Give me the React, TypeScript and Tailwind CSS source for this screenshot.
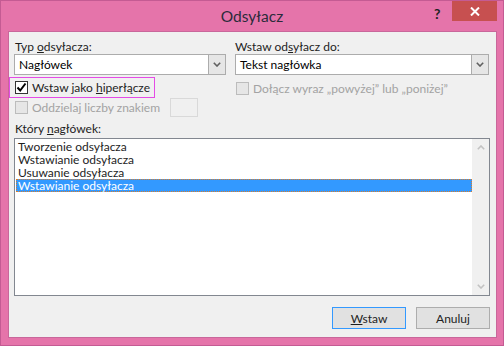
import React from 'react'

const Chevron = ({ up, color = '#606060' }: { up?: boolean; color?: string }) => (
  <svg width="8" height="5" viewBox="0 0 8 5">
    <polyline
      points={up ? '0.8,4.2 4,1 7.2,4.2' : '0.8,0.8 4,4 7.2,0.8'}
      fill="none"
      stroke={color}
      strokeWidth="1.6"
    />
  </svg>
)

const Checkbox = ({ checked, disabled }: { checked?: boolean; disabled?: boolean }) => (
  <span
    className={`w-[13px] h-[13px] shrink-0 border flex items-center justify-center ${
      disabled ? 'border-[#bcbcbc] bg-[#e6e6e6]' : 'border-[#333333] bg-white'
    }`}
  >
    {checked && (
      <svg width="11" height="11" viewBox="0 0 11 11">
        <polyline points="1.5,5.5 4.2,8.5 9.5,1.5" fill="none" stroke="#000" strokeWidth="2" />
      </svg>
    )}
  </span>
)

const Select = ({ value }: { value: string }) => (
  <div className="h-[21px] border border-[#acacac] bg-white flex">
    <div className="flex-1 pl-[4px] flex items-center text-black">{value}</div>
    <div className="w-[17px] bg-[#e6e6e6] border-l border-[#acacac] flex items-center justify-center">
      <Chevron />
    </div>
  </div>
)

const items = ['Tworzenie odsyłacza', 'Wstawianie odsyłacza', 'Usuwanie odsyłacza', 'Wstawianie odsyłacza']

export default function App() {
  return (
    <div className="w-[504px] h-[346px] bg-[#e574aa] border border-[#c45b93] flex flex-col font-['Lato',sans-serif] text-[12px] text-[#1e1e1e] leading-[15px] whitespace-nowrap select-none">
      {/* title bar */}
      <div className="h-[30px] relative flex items-start justify-center">
        <span className="mt-[5px] text-[15.5px] leading-[20px] text-[#2b2b3b]">Odsyłacz</span>
        <span className="absolute left-[433px] top-[5px] text-[14px] leading-[16px] font-bold text-[#222]">?</span>
        <div className="absolute left-[451px] top-0 w-[45px] h-[20px] bg-[#c75050] flex items-center justify-center">
          <svg width="10" height="9" viewBox="0 0 10 9">
            <path d="M1 0.5 L9 8.5 M9 0.5 L1 8.5" stroke="#fff" strokeWidth="2" />
          </svg>
        </div>
      </div>

      {/* client area */}
      <div className="ml-[7px] mr-[6px] mb-[7px] flex-1 border border-[#c9679b] bg-[#f0f0f0] pt-[7px] pl-[5px] pr-[5px] flex flex-col">
        <div className="grid grid-cols-[212px_254px] gap-x-[9px]">
          <div className="flex flex-col">
            <div className="h-[15px] pl-[1px]">
              Typ <span className="underline">o</span>dsyłacza:
            </div>
            <Select value="Nagłówek" />
            <div className="mt-[2px] -ml-[5px] w-[146px] h-[21px] border border-[#e44be6] flex items-center pl-[5px] gap-[4px]">
              <Checkbox checked />
              <span>
                Wstaw jako <span className="underline">h</span>iperłącze
              </span>
            </div>
            <div className="h-[19px] flex items-center gap-[4px] pl-[1px]">
              <Checkbox disabled />
              <span className="text-[#a3a3a3]">Oddzielaj liczby znakiem</span>
              <div className="ml-auto mr-[28px] w-[28px] h-[19px] border border-[#d9d9d9] bg-[#f0f0f0]" />
            </div>
          </div>
          <div className="flex flex-col">
            <div className="h-[15px]">
              Wstaw od<span className="underline">s</span>yłacz do:
            </div>
            <Select value="Tekst nagłówka" />
            <div className="mt-[6px] flex items-center gap-[4px] pl-[1px]">
              <Checkbox disabled />
              <span className="text-[#a3a3a3]">Dołącz wyraz „powyżej” lub „poniżej”</span>
            </div>
          </div>
        </div>

        <div className="mt-[4px] h-[15px] pl-[1px]">
          Który <span className="underline">n</span>agłówek:
        </div>
        <div className="mt-[2px] w-[476px] h-[158px] border border-[#828790] bg-white flex">
          <div className="flex-1 pt-[1px] pl-[1px]">
            {items.map((t, i) =>
              i === 3 ? (
                <div
                  key={i}
                  className="h-[13px] leading-[11px] pl-[1px] bg-[#3399ff] text-white border border-dotted border-[#d97d2a]"
                >
                  {t}
                </div>
              ) : (
                <div key={i} className="h-[13px] leading-[13px] pl-[2px]">
                  {t}
                </div>
              )
            )}
          </div>
          <div className="w-[17px] bg-[#f0f0f0] flex flex-col items-center justify-between py-[6px]">
            <Chevron up color="#c2c2c2" />
            <Chevron color="#c2c2c2" />
          </div>
        </div>

        <div className="mt-[11px] flex justify-end gap-[10px] pr-[1px]">
          <button className="w-[74px] h-[22px] border border-[#3399ff] bg-[#e1e1e1] text-[#1e1e1e]">
            <span className="underline">W</span>staw
          </button>
          <button className="w-[74px] h-[22px] border border-[#adadad] bg-[#e1e1e1] text-[#1e1e1e]">
            Anuluj
          </button>
        </div>
      </div>
    </div>
  )
}
